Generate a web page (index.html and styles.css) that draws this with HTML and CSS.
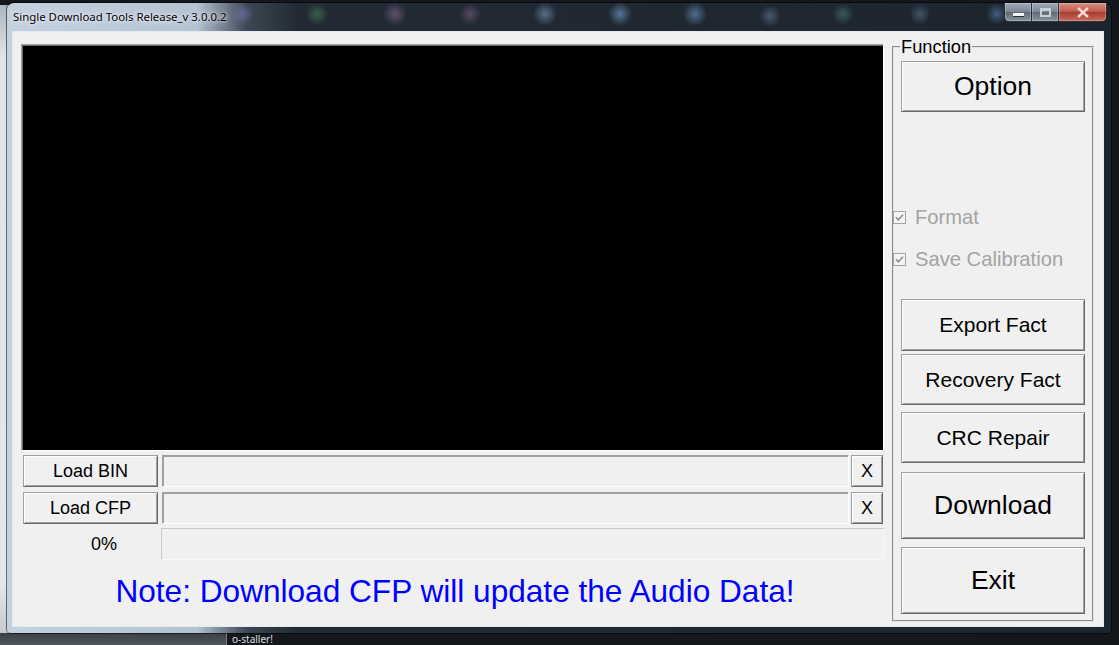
FILE: index.html
```html
<!DOCTYPE html>
<html lang="en">
<head>
    <meta charset="UTF-8">
    <meta name="viewport" content="width=device-width, initial-scale=1.0">
    <title>Single Download Tools Release_v 3.0.0.2</title>
    <link rel="stylesheet" href="styles.css">
</head>
<body>
    <div class="desktop">
        <div class="desk-left"></div>
        <div class="desk-bottom"></div>
        <div class="taskbar-item">o-staller!</div>

        <div class="window">
            <div class="titlebar">
                <span class="title">Single Download Tools Release_v 3.0.0.2</span>
                <div class="caption-buttons">
                    <span class="cap-btn cap-min"><i></i></span>
                    <span class="cap-btn cap-max"><i></i></span>
                    <span class="cap-btn cap-close">
                        <svg width="14" height="11" viewBox="0 0 14 11"><path d="M2 1 12 10M12 1 2 10" stroke="#f3d6d0" stroke-width="2.6" fill="none"/></svg>
                    </span>
                </div>
            </div>

            <div class="client">
                <div class="main-col">
                    <div class="screen"></div>

                    <div class="file-row row-bin">
                        <button class="btn load-btn">Load BIN</button>
                        <div class="path-field"></div>
                        <button class="btn clear-btn">X</button>
                    </div>
                    <div class="file-row row-cfp">
                        <button class="btn load-btn">Load CFP</button>
                        <div class="path-field"></div>
                        <button class="btn clear-btn">X</button>
                    </div>
                    <div class="progress-row">
                        <span class="percent">0%</span>
                        <div class="progress"></div>
                    </div>

                    <p class="note">Note: Download CFP will update the Audio Data!</p>
                </div>

                <fieldset class="function-box">
                    <legend>Function</legend>
                    <button class="btn big-btn option-btn">Option</button>

                    <label class="check check-format">
                        <svg class="check-box" width="13" height="13" viewBox="0 0 13 13"><rect x="0.5" y="0.5" width="12" height="12" fill="#f4f4f4" stroke="#a3a3a3"/><path d="M3 6.3 5.3 8.8 10 3.8" fill="none" stroke="#8c8c8c" stroke-width="1.6"/></svg>
                        Format
                    </label>
                    <label class="check check-calib">
                        <svg class="check-box" width="13" height="13" viewBox="0 0 13 13"><rect x="0.5" y="0.5" width="12" height="12" fill="#f4f4f4" stroke="#a3a3a3"/><path d="M3 6.3 5.3 8.8 10 3.8" fill="none" stroke="#8c8c8c" stroke-width="1.6"/></svg>
                        Save Calibration
                    </label>

                    <button class="btn mid-btn export-btn">Export Fact</button>
                    <button class="btn mid-btn recovery-btn">Recovery Fact</button>
                    <button class="btn mid-btn crc-btn">CRC Repair</button>
                    <button class="btn big-btn tall-btn download-btn">Download</button>
                    <button class="btn big-btn tall-btn exit-btn">Exit</button>
                </fieldset>
            </div>
        </div>
    </div>
</body>
</html>
```

FILE: styles.css
```css
/* Page / desktop behind the window */
body {
    margin: 0;
    background: #13171c;
    font-family: "Liberation Sans", Arial, sans-serif;
}

.desktop {
    position: relative;
    width: 1119px;
    height: 645px;
    overflow: hidden;
    background: #14181d;
}

.desk-left {
    position: absolute;
    left: 0;
    top: 5px;
    width: 9px;
    height: 628px;
    background: linear-gradient(#aab4bf, #dfe4e9 8%, #e4e7ea 92%, #c5cad0);
}

.desk-bottom {
    position: absolute;
    left: 0;
    top: 633px;
    width: 226px;
    height: 12px;
    background: linear-gradient(#3b4047, #50565d);
}

.taskbar-item {
    position: absolute;
    left: 226px;
    top: 633px;
    height: 12px;
    padding-left: 5px;
    border-left: 1px solid #7c828a;
    font-family: "Noto Sans", sans-serif;
    font-size: 10px;
    line-height: 12px;
    color: #d8dde2;
}

/* Window frame */
.window {
    position: absolute;
    left: 7px;
    top: 3px;
    width: 1104px;
    height: 630px;
    display: flex;
    flex-direction: column;
    border-radius: 7px 7px 4px 4px;
    background: linear-gradient(90deg, #c4d2e0 0, #b4c3d2 190px, #3c4753 240px, #222b35 290px, #1c242d 100%);
    box-shadow: 0 0 0 1px rgba(0, 0, 0, 0.55);
}

.titlebar {
    height: 28px;
    display: flex;
    align-items: flex-start;
    border-radius: 7px 7px 0 0;
    background-image:
        radial-gradient(circle at 236px 11px, rgba(125, 130, 205, 0.5) 0, rgba(125, 130, 205, 0) 11px),
        radial-gradient(circle at 310px 11px, rgba(80, 150, 100, 0.5) 0, rgba(80, 150, 100, 0) 11px),
        radial-gradient(circle at 388px 11px, rgba(170, 130, 170, 0.45) 0, rgba(170, 130, 170, 0) 12px),
        radial-gradient(circle at 463px 11px, rgba(150, 115, 150, 0.45) 0, rgba(150, 115, 150, 0) 11px),
        radial-gradient(circle at 538px 11px, rgba(130, 170, 210, 0.55) 0, rgba(130, 170, 210, 0) 12px),
        radial-gradient(circle at 613px 11px, rgba(120, 170, 220, 0.6) 0, rgba(120, 170, 220, 0) 12px),
        radial-gradient(circle at 688px 11px, rgba(120, 170, 220, 0.55) 0, rgba(120, 170, 220, 0) 12px),
        radial-gradient(circle at 763px 13px, rgba(120, 150, 190, 0.45) 0, rgba(120, 150, 190, 0) 11px),
        radial-gradient(circle at 836px 11px, rgba(90, 150, 140, 0.45) 0, rgba(90, 150, 140, 0) 11px),
        radial-gradient(circle at 913px 11px, rgba(110, 140, 170, 0.45) 0, rgba(110, 140, 170, 0) 11px),
        radial-gradient(circle at 990px 11px, rgba(100, 150, 210, 0.5) 0, rgba(100, 150, 210, 0) 11px);
}

.title {
    margin: 6px 0 0 6px;
    font-family: "Noto Sans", sans-serif;
    font-size: 11.4px;
    line-height: 16px;
    color: #000;
    text-shadow: 0 0 6px rgba(255, 255, 255, 0.9), 0 0 3px rgba(255, 255, 255, 0.8);
}

.caption-buttons {
    display: flex;
    margin-left: auto;
    margin-right: 4px;
    height: 19px;
}

.cap-btn {
    display: flex;
    align-items: center;
    justify-content: center;
    box-sizing: border-box;
    height: 19px;
    border: 1px solid rgba(10, 14, 20, 0.75);
    border-top: none;
    box-shadow: inset 0 0 0 1px rgba(255, 255, 255, 0.25);
    background: linear-gradient(#a0abb6, #7b8794 48%, #5f6a76 52%, #8895a2);
}

.cap-min {
    width: 28px;
    border-bottom-left-radius: 5px;
}

.cap-min i {
    width: 11px;
    height: 3px;
    margin-top: 5px;
    background: #f2f4f6;
    box-shadow: 0 1px 0 #2a2f36;
}

.cap-max {
    width: 27px;
    border-left: none;
}

.cap-max i {
    box-sizing: border-box;
    width: 11px;
    height: 9px;
    border: 2px solid #c9d0d6;
    border-top-width: 3px;
}

.cap-close {
    width: 48px;
    border-left: none;
    border-bottom-right-radius: 5px;
    background: linear-gradient(#d59286, #c0594b 48%, #a53e31 52%, #c66b5c);
}

/* Client area */
.client {
    box-sizing: border-box;
    display: flex;
    align-items: flex-start;
    height: 596px;
    margin: 0 7px 0 5px;
    background: #f0f0f0;
    border: 1px solid #e4eaf0;
}

.main-col {
    width: 863px;
    margin: 12px 0 0 8px;
}

.screen {
    box-sizing: border-box;
    height: 407px;
    background: #000;
    border: 1px solid;
    border-color: #a0a0a0 #ffffff #ffffff #a0a0a0;
    box-shadow: inset 1px 1px 0 #696969;
}

/* Buttons */
.btn {
    box-sizing: border-box;
    display: block;
    margin: 0;
    padding: 0;
    font-family: "Liberation Sans", Arial, sans-serif;
    color: #000;
    background: #f0f0f0;
    border: 1px solid;
    border-color: #a0a0a0 #696969 #696969 #a0a0a0;
    box-shadow: inset 1px 1px 0 #ffffff, inset -1px -1px 0 #a0a0a0;
    cursor: pointer;
}

.file-row {
    display: flex;
    height: 32px;
    padding-left: 2px;
}

.row-bin {
    margin-top: 4px;
}

.row-cfp {
    margin-top: 5px;
}

.load-btn {
    width: 135px;
    height: 32px;
    font-size: 18px;
}

.path-field {
    box-sizing: border-box;
    width: 687px;
    height: 32px;
    margin-left: 4px;
    background: #f0f0f0;
    border: 1px solid;
    border-color: #a0a0a0 #ffffff #ffffff #a0a0a0;
    box-shadow: inset 1px 1px 0 #a0a0a0;
}

.clear-btn {
    width: 32px;
    height: 32px;
    margin-left: 2px;
    font-size: 18px;
}

.progress-row {
    display: flex;
    align-items: center;
    height: 32px;
    margin-top: 4px;
}

.percent {
    width: 140px;
    box-sizing: border-box;
    padding-left: 70px;
    font-size: 18px;
}

.progress {
    box-sizing: border-box;
    width: 723px;
    height: 32px;
    border: 1px solid;
    border-color: #c8c8c8 #f8f8f8 #f8f8f8 #c8c8c8;
}

.note {
    margin: 13px 0 0;
    font-size: 31.6px;
    line-height: 36px;
    color: #0000ff;
    text-align: center;
    padding-left: 5px;
}

/* Function group */
.function-box {
    box-sizing: border-box;
    width: 202px;
    margin: 5px 0 0 8px;
    padding: 4px 7px 6px;
    border: 2px groove #e2e2e2;
    min-inline-size: 0;
}

.function-box legend {
    padding: 0 1px;
    margin-left: -1px;
    font-size: 18.3px;
    line-height: 20px;
}

.big-btn {
    width: 100%;
    font-size: 26.5px;
}

.mid-btn {
    width: 100%;
    font-size: 21px;
}

.option-btn {
    height: 51px;
}

.check {
    display: flex;
    align-items: center;
    height: 22px;
    margin-left: -8px;
    font-size: 20.2px;
    color: #a3a3a3;
    white-space: nowrap;
}

.check-box {
    margin-right: 9px;
    flex: none;
}

.check-format {
    margin-top: 94px;
}

.check-calib {
    margin-top: 20px;
}

.export-btn {
    height: 52px;
    margin-top: 29px;
}

.recovery-btn {
    height: 51px;
    margin-top: 3px;
}

.crc-btn {
    height: 51px;
    margin-top: 7px;
}

.tall-btn {
    height: 67px;
}

.download-btn {
    margin-top: 9px;
}

.exit-btn {
    margin-top: 8px;
}
```
